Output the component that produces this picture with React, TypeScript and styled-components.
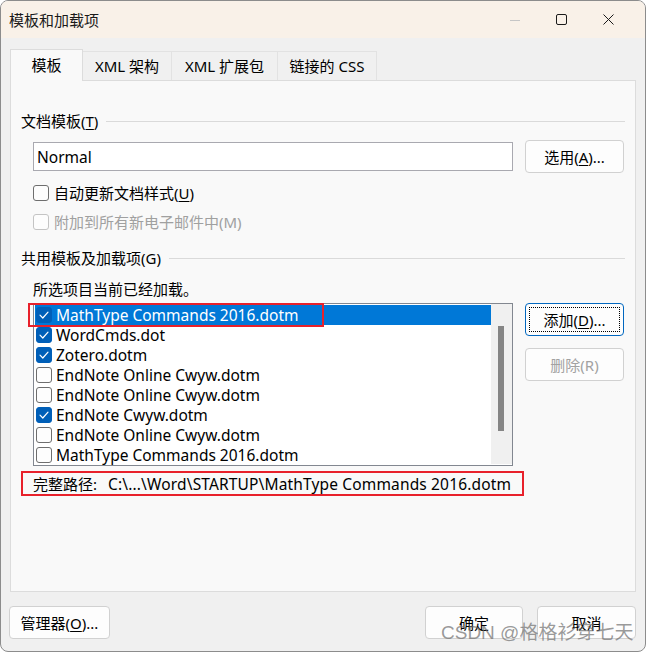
import React from "react";
import styled, { createGlobalStyle, css } from "styled-components";

const GlobalStyle = createGlobalStyle`
  html, body { margin: 0; padding: 0; background: #ffffff; }
  body {
    font-family: "Noto Sans", "Noto Sans CJK SC", sans-serif;
    font-size: 15px;
    color: #000;
  }
  * { box-sizing: border-box; }
`;

const Window = styled.div`
  position: relative;
  width: 646px;
  height: 652px;
  border: 1px solid #8c8c8c;
  border-radius: 8px;
  overflow: hidden;
  background: #f0f0f0;
  display: flex;
  flex-direction: column;
`;

const TitleBar = styled.div`
  height: 37px;
  flex: none;
  background: #f9f1e8;
  display: flex;
  align-items: center;
  padding-left: 8px;
`;

const Title = styled.div`
  flex: 1;
  font-size: 15px;
  line-height: 20px;
  color: #1a1a1a;
`;

const Controls = styled.div`
  display: flex;
  height: 100%;
  margin-right: 13px;
`;

const ControlButton = styled.div`
  width: 47px;
  height: 100%;
  display: flex;
  align-items: center;
  justify-content: center;
`;

const Body = styled.div`
  flex: 1;
  display: flex;
  flex-direction: column;
  padding: 11px 9px 0 9px;
`;

const TabBar = styled.div`
  display: flex;
  align-items: flex-end;
  height: 32px;
  position: relative;
  z-index: 1;
`;

const Tab = styled.div<{ $active?: boolean; $w: number }>`
  width: ${(p) => p.$w}px;
  display: flex;
  align-items: center;
  justify-content: center;
  font-size: 15px;
  line-height: 20px;
  ${(p) =>
    p.$active
      ? css`
          height: 32px;
          background: #f9f9f9;
          border: 1px solid #dcdcdc;
          border-bottom: none;
          padding-bottom: 2px;
        `
      : css`
          height: 29px;
          margin-bottom: 1px;
          background: #f0f0f0;
          border: 1px solid #e2e2e2;
          border-left: none;
          border-bottom: none;
        `}
`;

const Panel = styled.div`
  height: 512px;
  margin-top: -1px;
  background: #f9f9f9;
  border: 1px solid #dcdcdc;
  display: flex;
  flex-direction: column;
  padding: 30px 10px 0 10px;
`;

const GroupHeader = styled.div<{ $mt?: number }>`
  display: flex;
  align-items: center;
  height: 20px;
  margin-top: ${(p) => p.$mt ?? 0}px;
  line-height: 20px;
`;

const GroupLine = styled.div`
  flex: 1;
  height: 1px;
  background: #dadada;
  margin-left: 8px;
`;

const Mn = styled.span`
  text-decoration: underline;
  text-underline-offset: 2px;
  text-decoration-thickness: 1px;
`;

const Latin = styled.span<{ $ls?: number }>`
  font-size: 15.5px;
  letter-spacing: ${(p) => p.$ls ?? 0}px;
`;

const Row = styled.div<{ $mt?: number }>`
  display: flex;
  align-items: center;
  gap: 12px;
  margin-top: ${(p) => p.$mt ?? 0}px;
  padding-left: 12px;
`;

const TextInput = styled.div`
  width: 480px;
  height: 29px;
  background: #ffffff;
  border: 1px solid #a9a9b0;
  display: flex;
  align-items: center;
  padding-left: 3px;
  line-height: 20px;
`;

const Button = styled.div<{ $w?: number; $disabled?: boolean; $default?: boolean }>`
  position: relative;
  width: ${(p) => p.$w ?? 99}px;
  height: 33px;
  flex: none;
  background: #fdfdfd;
  border: 1px solid ${(p) => (p.$default ? "#0067c0" : "#d1d1d1")};
  border-radius: 4px;
  display: flex;
  align-items: center;
  justify-content: center;
  line-height: 20px;
  color: ${(p) => (p.$disabled ? "#a2a2a2" : "#000")};
  ${(p) =>
    p.$default &&
    css`
      &::after {
        content: "";
        position: absolute;
        inset: 3px;
        border: 1px dotted #000;
      }
    `}
`;

const CheckRow = styled.div<{ $mt?: number; $disabled?: boolean }>`
  display: flex;
  align-items: center;
  gap: 5px;
  height: 20px;
  margin-top: ${(p) => p.$mt ?? 0}px;
  padding-left: 12px;
  line-height: 20px;
  color: ${(p) => (p.$disabled ? "#a0a0a0" : "#000")};
`;

const Box = styled.span<{ $checked?: boolean; $disabled?: boolean }>`
  width: 16px;
  height: 16px;
  flex: none;
  border-radius: 3px;
  display: inline-flex;
  align-items: center;
  justify-content: center;
  background: ${(p) => (p.$checked ? "#005fb8" : "#fdfdfd")};
  border: 1px solid
    ${(p) => (p.$checked ? "#005fb8" : p.$disabled ? "#c4c4c4" : "#6e6e6e")};
`;

const Note = styled.div`
  margin-top: 11px;
  padding-left: 12px;
  height: 20px;
  line-height: 20px;
`;

const ListRow = styled.div`
  display: flex;
  align-items: flex-start;
  gap: 12px;
  margin-top: 4px;
  padding-left: 12px;
`;

const ListWrap = styled.div`
  position: relative;
  width: 480px;
  height: 163px;
`;

const ListBox = styled.div`
  width: 100%;
  height: 100%;
  background: #ffffff;
  border: 1px solid #828790;
  display: flex;
  padding: 1px 0 0 1px;
`;

const Items = styled.div`
  flex: 1;
  display: flex;
  flex-direction: column;
`;

const Item = styled.div<{ $selected?: boolean }>`
  height: 20px;
  display: flex;
  align-items: center;
  gap: 4px;
  padding-left: 1px;
  line-height: 20px;
  white-space: nowrap;
  background: ${(p) => (p.$selected ? "#0078d7" : "transparent")};
  color: ${(p) => (p.$selected ? "#ffffff" : "#000")};
`;

const ScrollTrack = styled.div`
  width: 21px;
  height: 100%;
  flex: none;
  background: #f0f0f0;
  margin-top: -1px;
  padding: 22px 0 0 7px;
`;

const ScrollThumb = styled.div`
  width: 6px;
  height: 105px;
  background: #858585;
`;

const RedMark = styled.div`
  position: absolute;
  left: -5px;
  top: 0;
  width: 296px;
  height: 24px;
  border: 2px solid #e8212b;
  pointer-events: none;
`;

const ButtonColumn = styled.div`
  display: flex;
  flex-direction: column;
  gap: 12px;
`;

const PathRow = styled.div`
  margin-top: 5px;
  width: 503px;
  height: 25px;
  border: 2px solid #e8212b;
  display: flex;
  align-items: center;
  padding-left: 10px;
  line-height: 20px;
  white-space: nowrap;
`;

const PathLabel = styled.span`
  margin-right: 11px;
`;

const Footer = styled.div`
  display: flex;
  align-items: center;
  margin-top: 14px;
  margin-left: -1px;
`;

const Spacer = styled.div`
  flex: 1;
`;

const FooterGap = styled.div`
  width: 14px;
`;

const Watermark = styled.div`
  position: absolute;
  left: 440px;
  top: 620px;
  font-family: "Liberation Sans", "Noto Sans CJK SC", sans-serif;
  font-size: 19px;
  line-height: 24px;
  color: rgba(110, 110, 110, 0.7);
  white-space: nowrap;
  pointer-events: none;
`;

const CheckMark = () => (
  <svg width="10" height="8" viewBox="0 0 10 8">
    <path d="M1 4.2 L3.8 7 L9 1.2" fill="none" stroke="#fff" strokeWidth="1.2" strokeLinecap="round" strokeLinejoin="round" />
  </svg>
);

const items: { name: string; checked: boolean }[] = [
  { name: "MathType Commands 2016.dotm", checked: true },
  { name: "WordCmds.dot", checked: true },
  { name: "Zotero.dotm", checked: true },
  { name: "EndNote Online Cwyw.dotm", checked: false },
  { name: "EndNote Online Cwyw.dotm", checked: false },
  { name: "EndNote Cwyw.dotm", checked: true },
  { name: "EndNote Online Cwyw.dotm", checked: false },
  { name: "MathType Commands 2016.dotm", checked: false },
];

export default function App() {
  return (
    <>
      <GlobalStyle />
      <Window>
        <TitleBar>
          <Title>模板和加载项</Title>
          <Controls>
            <ControlButton>
              <svg width="10" height="10" viewBox="0 0 10 10">
                <path d="M0 5.5 H10" stroke="#c6c6c6" strokeWidth="1" />
              </svg>
            </ControlButton>
            <ControlButton>
              <svg width="11" height="11" viewBox="0 0 11 11">
                <rect x="0.5" y="0.5" width="10" height="10" rx="1.5" fill="none" stroke="#1a1a1a" strokeWidth="1" />
              </svg>
            </ControlButton>
            <ControlButton>
              <svg width="11" height="11" viewBox="0 0 11 11">
                <path d="M0.5 0.5 L10.5 10.5 M10.5 0.5 L0.5 10.5" stroke="#1a1a1a" strokeWidth="1" />
              </svg>
            </ControlButton>
          </Controls>
        </TitleBar>
        <Body>
          <TabBar>
            <Tab $active $w={73}>模板</Tab>
            <Tab $w={89}>XML 架构</Tab>
            <Tab $w={106}>XML 扩展包</Tab>
            <Tab $w={99}>链接的 CSS</Tab>
          </TabBar>
          <Panel>
            <GroupHeader>
              <span>
                文档模板(<Mn>T</Mn>)
              </span>
              <GroupLine />
            </GroupHeader>
            <Row $mt={9}>
              <TextInput>
                <Latin>Normal</Latin>
              </TextInput>
              <Button>
                选用(<Mn>A</Mn>)...
              </Button>
            </Row>
            <CheckRow $mt={10}>
              <Box />
              <span>
                自动更新文档样式(<Mn>U</Mn>)
              </span>
            </CheckRow>
            <CheckRow $mt={9} $disabled>
              <Box $disabled />
              <span>附加到所有新电子邮件中(M)</span>
            </CheckRow>
            <GroupHeader $mt={16}>
              <span>共用模板及加载项(G)</span>
              <GroupLine />
            </GroupHeader>
            <Note>所选项目当前已经加载。</Note>
            <ListRow>
              <ListWrap>
                <ListBox>
                  <Items>
                    {items.map((it, i) => (
                      <Item key={i} $selected={i === 0}>
                        <Box $checked={it.checked}>{it.checked && <CheckMark />}</Box>
                        <Latin>{it.name}</Latin>
                      </Item>
                    ))}
                  </Items>
                  <ScrollTrack>
                    <ScrollThumb />
                  </ScrollTrack>
                </ListBox>
                <RedMark />
              </ListWrap>
              <ButtonColumn>
                <Button $default>
                  添加(<Mn>D</Mn>)...
                </Button>
                <Button $disabled>删除(R)</Button>
              </ButtonColumn>
            </ListRow>
            <PathRow>
              <PathLabel>完整路径:</PathLabel>
              <Latin $ls={0.15}>C:\...\Word\STARTUP\MathType Commands 2016.dotm</Latin>
            </PathRow>
          </Panel>
          <Footer>
            <Button $w={101}>
              管理器(<Mn>O</Mn>)...
            </Button>
            <Spacer />
            <Button $w={98}>确定</Button>
            <FooterGap />
            <Button $w={99}>取消</Button>
          </Footer>
        </Body>
        <Watermark>CSDN @格格衫穿七天</Watermark>
      </Window>
    </>
  );
}
